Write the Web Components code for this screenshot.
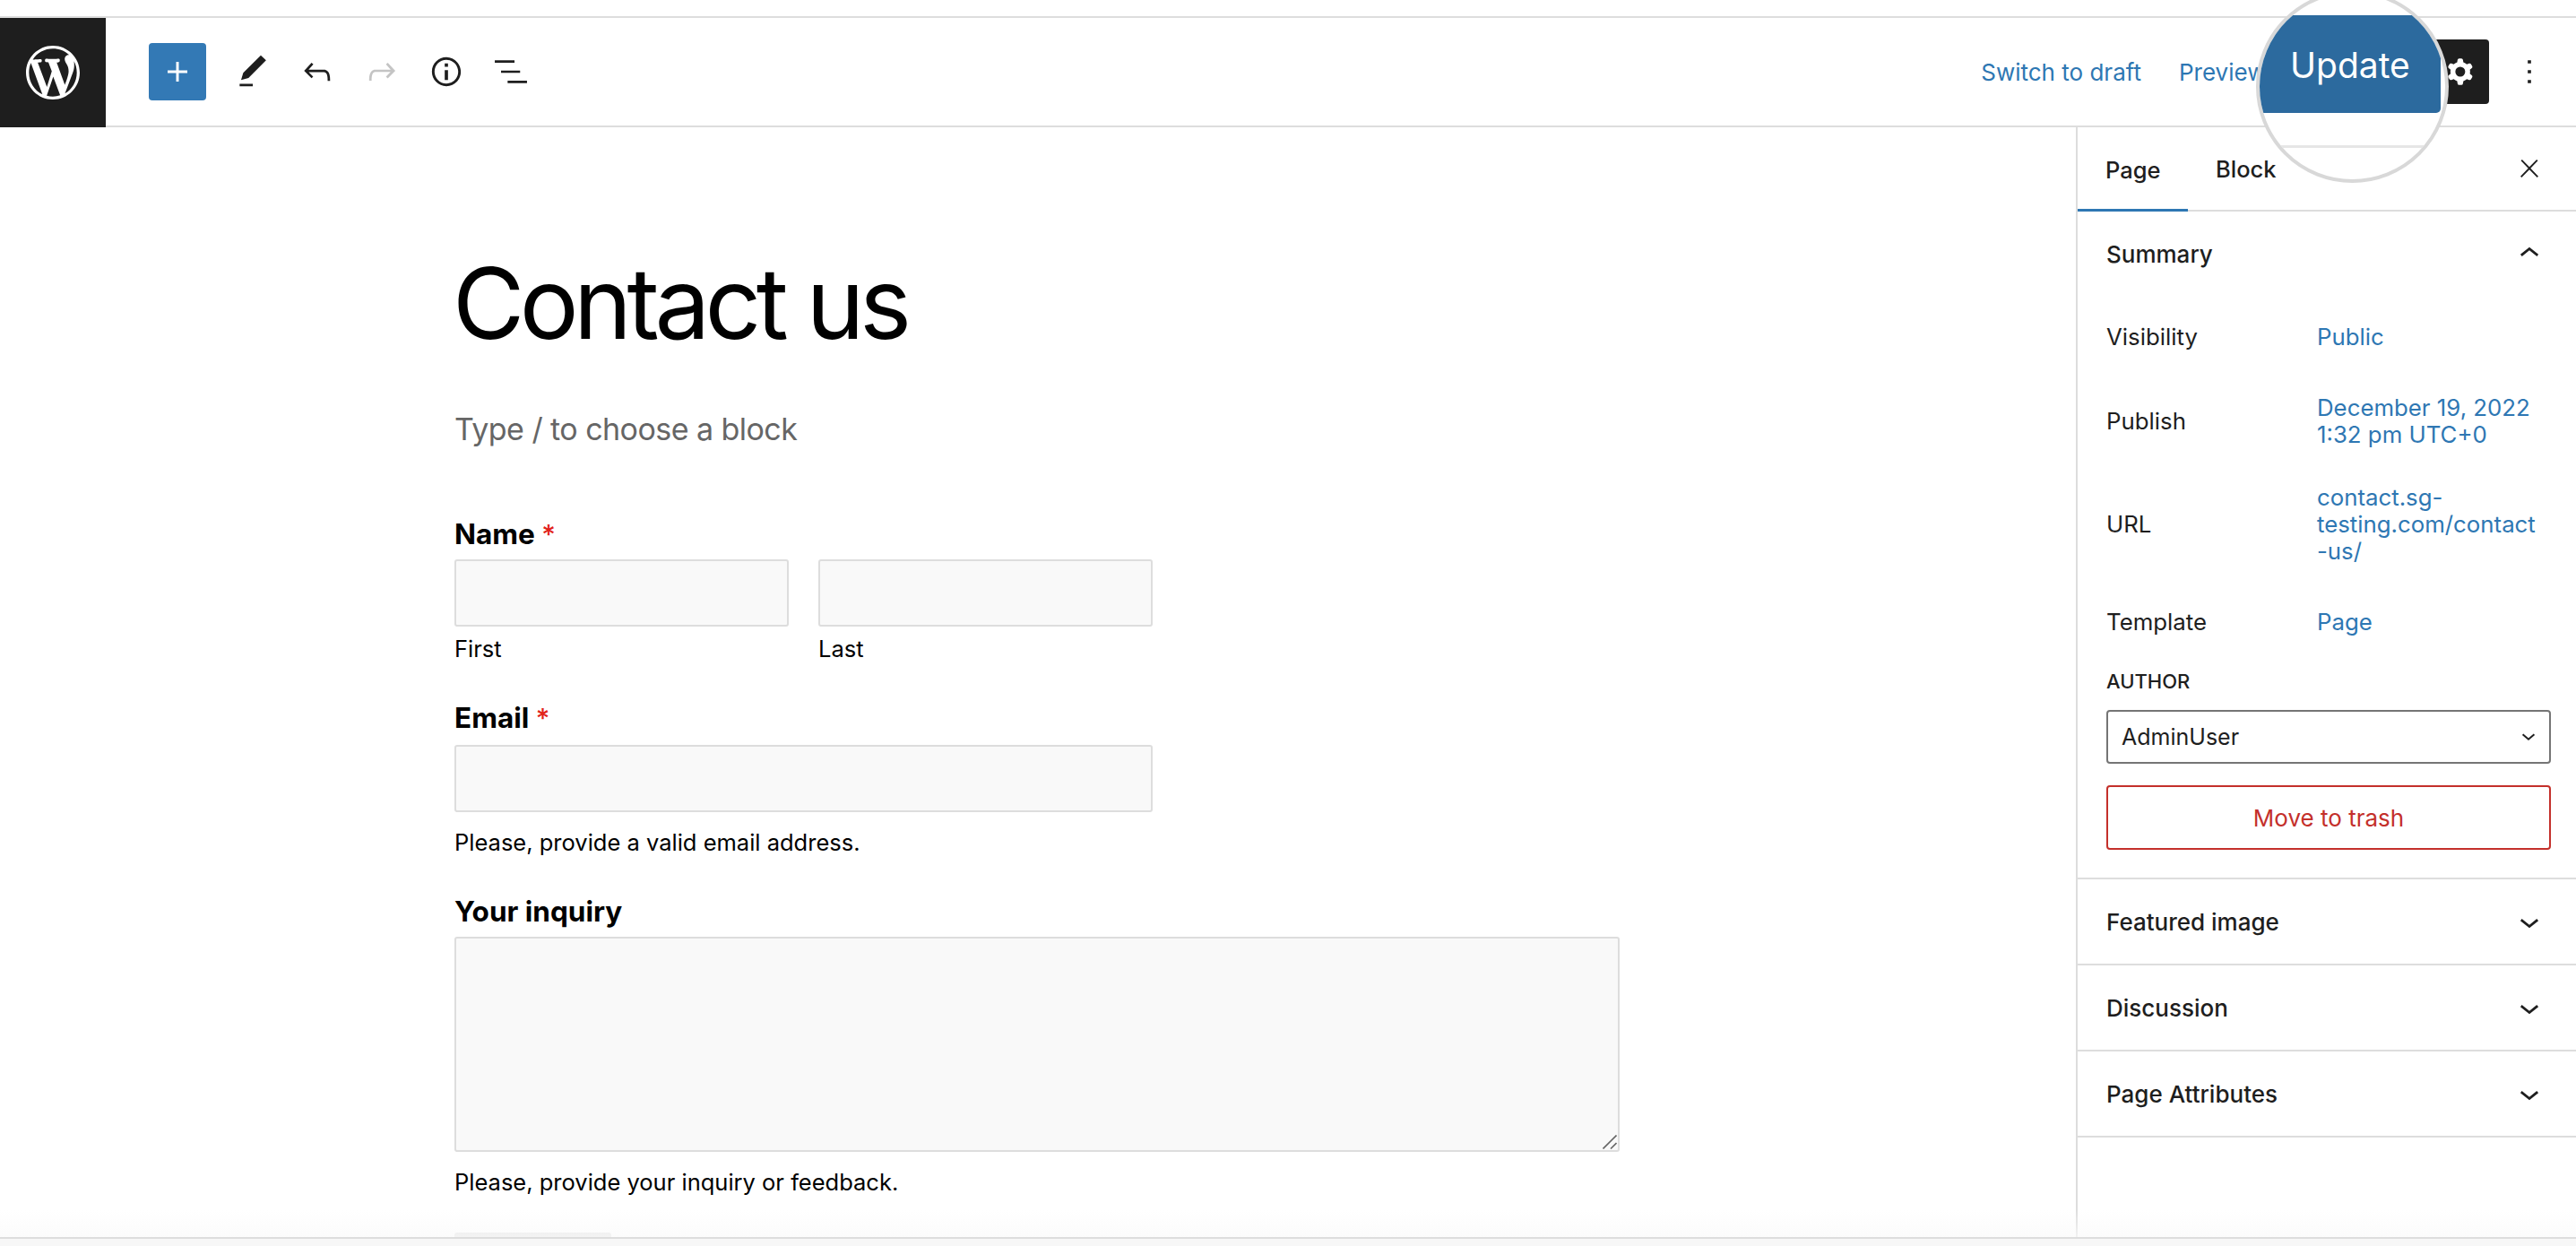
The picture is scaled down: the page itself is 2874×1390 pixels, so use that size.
<!DOCTYPE html>
<html>
<head>
<meta charset="utf-8">
<title>Contact us</title>
<style>
  html, body { margin: 0; padding: 0; background: #fff; }
  body { font-family: Inter, "Liberation Sans", sans-serif; color: #1e1e1e; overflow: hidden; }
</style>
</head>
<body>
<wp-editor>
  <wp-header slot="header"></wp-header>
  <wp-contact-form slot="main"></wp-contact-form>
  <wp-sidebar slot="side"></wp-sidebar>
</wp-editor>

<script>
const ICONS = {
  plus: 'M18 11.2h-5.2V6h-1.6v5.2H6v1.6h5.2V18h1.6v-5.2H18z',
  edit: 'M20.1 5.1L16.9 2 6.2 12.7l-1.3 4.4 4.5-1.3L20.1 5.1zM4 20.8h8v-1.5H4v1.5z',
  undo: 'M18.3 11.7c-.6-.6-1.4-.9-2.3-.9H6.7l2.9-3.3-1.1-1-4.5 5L8.5 16l1-1-2.7-2.7H16c.5 0 .9.2 1.3.5 1 1 1 3.4 1 4.5v.3h1.5v-.2c0-1.5 0-4.3-1.5-5.7z',
  redo: 'M15.6 6.5l-1.1 1 2.9 3.3H8c-.9 0-1.7.3-2.3.9-1.4 1.5-1.4 4.2-1.4 5.6v.2h1.5v-.3c0-1.1 0-3.5 1-4.5.3-.3.7-.5 1.3-.5h9.2L14.5 15l1.1 1.1 4.6-4.6-4.6-5z',
  info: 'M12 3.2c-4.8 0-8.8 3.9-8.8 8.8 0 4.8 3.9 8.8 8.8 8.8 4.8 0 8.8-3.9 8.8-8.8 0-4.8-4-8.8-8.8-8.8zm0 16c-4 0-7.2-3.3-7.2-7.2C4.8 8 8 4.8 12 4.8s7.2 3.3 7.2 7.2c0 4-3.2 7.2-7.2 7.2zM11 17h2v-6h-2v6zm0-8h2V7h-2v2z',
  list: 'M2.2 5.1h12v1.4h-12zM6 11.3h11.6v1.4H6zM10 17.5h11.8v1.4H10z',
  cog: 'M10.289 4.836A1 1 0 0 1 11.275 4h1.306a1 1 0 0 1 .987.836l.244 1.466c.787.26 1.503.679 2.108 1.218l1.393-.522a1 1 0 0 1 1.216.437l.653 1.13a1 1 0 0 1-.23 1.273l-1.148.944a6.025 6.025 0 0 1 0 2.435l1.149.946a1 1 0 0 1 .23 1.272l-.653 1.13a1 1 0 0 1-1.216.437l-1.394-.522c-.605.54-1.32.958-2.108 1.218l-.244 1.466a1 1 0 0 1-.987.836h-1.306a1 1 0 0 1-.986-.836l-.244-1.466a5.995 5.995 0 0 1-2.108-1.218l-1.394.522a1 1 0 0 1-1.217-.436l-.653-1.131a1 1 0 0 1 .23-1.272l1.149-.946a6.026 6.026 0 0 1 0-2.435l-1.148-.944a1 1 0 0 1-.23-1.272l.653-1.131a1 1 0 0 1 1.217-.437l1.393.522a5.994 5.994 0 0 1 2.108-1.218l.244-1.466ZM14.929 12a3 3 0 1 1-6 0 3 3 0 0 1 6 0Z',
  more: 'M13 19h-2v-2h2v2zm0-6h-2v-2h2v2zm0-6h-2V5h2v2z',
  close: 'M13 11.8l6.1-6.3-1-1-6.1 6.2-6.1-6.2-1 1 6.1 6.3-6.5 6.7 1 1 6.5-6.6 6.5 6.6 1-1z',
  up: 'M6.5 12.4L12 8l5.5 4.4-.9 1.2L12 10l-4.5 3.6-1-1.2z',
  down: 'M17.5 11.6L12 16l-5.5-4.4.9-1.2L12 14l4.5-3.6 1 1.2z'
};

class WpIcon extends HTMLElement {
  connectedCallback() {
    const d = ICONS[this.getAttribute('name')];
    this.attachShadow({mode: 'open'}).innerHTML = `
      <style>
        :host { display: inline-flex; width: var(--icon-size, 44px); height: var(--icon-size, 44px); color: inherit; }
        svg { width: 100%; height: 100%; fill: currentColor; display: block; }
      </style>
      <svg viewBox="0 0 24 24"><path fill-rule="evenodd" d="${d}"></path></svg>`;
  }
}
customElements.define('wp-icon', WpIcon);

class WpEditor extends HTMLElement {
  constructor() {
    super();
    this.attachShadow({mode: 'open'}).innerHTML = `
      <style>
        :host { display: flex; flex-direction: column; height: 1390px; width: 2874px; overflow: hidden; position: relative; background: #fff; }
        .top { height: 18px; flex: none; border-bottom: 2px solid #ddd; }
        .body { flex: 1; display: flex; min-height: 0; position: relative; overflow: hidden; }
        .main { flex: 1; min-width: 0; overflow: hidden; }
        .fade { position: absolute; left: 0; right: 0; bottom: 0; height: 30px; background: linear-gradient(rgba(250,250,250,0), rgba(250,250,250,.7)); pointer-events: none; }
        .foot { height: 8px; flex: none; border-top: 2px solid #ddd; background: #f7f7f7; }
      </style>
      <div class="top"></div>
      <slot name="header"></slot>
      <div class="body">
        <div class="main"><slot name="main"></slot></div>
        <slot name="side"></slot>
        <div class="fade"></div>
      </div>
      <div class="foot"></div>`;
  }
}
customElements.define('wp-editor', WpEditor);

class WpHeader extends HTMLElement {
  constructor() {
    super();
    this.attachShadow({mode: 'open'}).innerHTML = `
      <style>
        :host { display: flex; flex: none; height: 120px; align-items: center; border-bottom: 2px solid #ddd; position: relative; z-index: 2; background: #fff; font-size: 26px; }
        .logo { width: 118px; height: 122px; margin-bottom: -2px; background: #1e1e1e; display: flex; align-items: center; justify-content: center; flex: none; }
        .logo svg { width: 72px; height: 72px; fill: #fff; display: block; }
        .add { width: 64px; height: 64px; margin: 0 16px 0 48px; background: #3379b5; color: #fff; border-radius: 4px; display: flex; align-items: center; justify-content: center; }
        .tool { width: 72px; height: 64px; display: flex; align-items: center; justify-content: center; color: #1e1e1e; }
        .tool.off { color: #c4c4c4; }
        .spacer { flex: 1; }
        .link { color: #2e77b3; white-space: nowrap; }
        .preview { width: 282px; margin-left: 42px; }
        .gear { width: 64px; height: 72px; background: #1e1e1e; color: #fff; border-radius: 4px; display: flex; align-items: center; justify-content: center; }
        .more { margin: 0 30px 0 23px; color: #1e1e1e; display: flex; }
        .lens { position: absolute; left: 2517px; top: -31px; width: 215px; height: 215px; box-sizing: border-box; border: 4px solid #d8d8d8; border-radius: 50%; background: #fff; overflow: hidden; }
        .lens .update { position: absolute; left: -40px; top: 24px; width: 242px; height: 109px; background: #2c6a9e; border-radius: 5px; color: #fff; font-size: 39px; line-height: 1; }
        .lens .update span { position: absolute; left: 74px; top: 36px; }
        .lens .rule { position: absolute; left: 0; right: 0; top: 169px; height: 3px; background: #e6e6e6; }
      </style>
      <div class="logo"><svg viewBox="-2 -2 24 24"><path d="M20 10c0-5.51-4.49-10-10-10C4.48 0 0 4.49 0 10c0 5.52 4.48 10 10 10 5.51 0 10-4.48 10-10zM7.78 15.37L4.37 6.22c.55-.02 1.17-.08 1.17-.08.5-.06.44-1.13-.06-1.11 0 0-1.45.11-2.37.11-.18 0-.37 0-.58-.01C4.12 2.69 6.87 1.11 10 1.11c2.33 0 4.45.87 6.05 2.34-.68-.11-1.65.39-1.65 1.58 0 .74.45 1.36.9 2.1.35.61.55 1.36.55 2.46 0 1.49-1.4 5-1.4 5l-3.03-8.37c.54-.02.82-.17.82-.17.5-.05.44-1.25-.06-1.22 0 0-1.44.12-2.38.12-.87 0-2.33-.12-2.33-.12-.5-.03-.56 1.2-.06 1.22l.92.08 1.26 3.41zM17.41 10c.24-.64.74-1.87.43-4.25.7 1.29 1.05 2.71 1.05 4.25 0 3.29-1.73 6.24-4.4 7.78.97-2.59 1.94-5.2 2.92-7.78zM6.1 18.09C3.12 16.65 1.11 13.53 1.11 10c0-1.3.23-2.48.72-3.59C3.25 10.3 4.67 14.2 6.1 18.09zm4.03-6.63l2.58 6.98c-.86.29-1.76.45-2.71.45-.79 0-1.57-.11-2.29-.33.81-2.38 1.62-4.74 2.42-7.1z"></path></svg></div>
      <div class="add"><wp-icon name="plus"></wp-icon></div>
      <div class="tool"><wp-icon name="edit"></wp-icon></div>
      <div class="tool"><wp-icon name="undo"></wp-icon></div>
      <div class="tool off"><wp-icon name="redo"></wp-icon></div>
      <div class="tool"><wp-icon name="info"></wp-icon></div>
      <div class="tool"><wp-icon name="list"></wp-icon></div>
      <div class="spacer"></div>
      <span class="link">Switch to draft</span>
      <span class="link preview">Preview</span>
      <div class="gear"><wp-icon name="cog"></wp-icon></div>
      <div class="more"><wp-icon name="more"></wp-icon></div>
      <div class="lens">
        <div class="update"><span>Update</span></div>
        <div class="rule"></div>
      </div>`;
  }
}
customElements.define('wp-header', WpHeader);

class WpField extends HTMLElement {
  connectedCallback() {
    const label = this.getAttribute('label');
    const req = this.hasAttribute('required') ? ' <i>*</i>' : '';
    this.attachShadow({mode: 'open'}).innerHTML = `
      <style>
        :host { display: block; }
        .label { font-size: 31.5px; line-height: 40px; font-weight: 700; color: #000; height: 40px; margin-bottom: var(--label-gap, 8px); }
        i { color: #e2231a; font-style: normal; font-weight: 500; font-size: 30px; }
        .hint { font-size: 25.5px; line-height: 34px; color: #000; margin-top: 17px; }
        .hint:empty { display: none; }
      </style>
      <div class="label">${label}${req}</div>
      <slot></slot>
      <div class="hint">${this.getAttribute('hint') || ''}</div>`;
  }
}
customElements.define('wp-field', WpField);

class WpInput extends HTMLElement {
  connectedCallback() {
    const area = this.hasAttribute('area');
    this.attachShadow({mode: 'open'}).innerHTML = `
      <style>
        :host { display: block; font-size: 25.5px; color: #000; line-height: 34px; position: relative; }
        input, textarea { display: block; width: 100%; box-sizing: border-box; height: ${area ? 240 : 75}px; background: #f9f9f9; border: 2px solid #ddd; border-radius: 3px; margin: 0; padding: 0; outline: 0; resize: none; }
        .grip { position: absolute; right: 3px; bottom: 3px; width: 16px; height: 16px; }
        .sub { margin-top: 8px; }
        .sub:empty { display: none; }
      </style>
      ${area ? `<textarea></textarea>
      <svg class="grip" viewBox="0 0 16 16" fill="none" stroke="#666" stroke-width="1.6"><path d="M0.5 15.5L15.5 0.5M9 15.5L15.5 9"></path></svg>` : '<input type="text">'}
      <div class="sub">${this.getAttribute('sub') || ''}</div>`;
  }
}
customElements.define('wp-input', WpInput);

class WpContactForm extends HTMLElement {
  constructor() {
    super();
    this.attachShadow({mode: 'open'}).innerHTML = `
      <style>
        :host { display: block; padding: 136px 0 0 507px; width: 1300px; }
        h1 { margin: 0 0 0 -2px; font-size: 110px; line-height: 120px; font-weight: 400; color: #000; letter-spacing: -5.6px; }
        .hintline { font-size: 34px; line-height: 50px; color: #666; margin: 56px 0 0; letter-spacing: -0.55px; }
        .name { margin-top: 72px; }
        .pair { display: flex; gap: 33px; width: 779px; }
        .pair wp-input { flex: 1; }
        .email { margin-top: 40px; width: 779px; --label-gap: 10px; }
        .inquiry { margin-top: 40px; }
        .submit { margin-top: 39px; width: 175px; height: 60px; background: #e4e4e4; border-radius: 3px; }
      </style>
      <h1>Contact us</h1>
      <p class="hintline">Type / to choose a block</p>
      <wp-field class="name" label="Name" required>
        <div class="pair">
          <wp-input sub="First"></wp-input>
          <wp-input sub="Last"></wp-input>
        </div>
      </wp-field>
      <wp-field class="email" label="Email" required hint="Please, provide a valid email address."><wp-input></wp-input></wp-field>
      <wp-field class="inquiry" label="Your inquiry" hint="Please, provide your inquiry or feedback."><wp-input area></wp-input></wp-field>
      <div class="submit"></div>`;
  }
}
customElements.define('wp-contact-form', WpContactForm);

class WpRow extends HTMLElement {
  constructor() {
    super();
    this.attachShadow({mode: 'open'}).innerHTML = `
      <style>
        :host { display: grid; grid-template-columns: 235px 1fr; align-items: center; font-size: 25.8px; line-height: 30px; }
        .v { color: #2e77b3; overflow-wrap: anywhere; }
      </style>
      <div><slot name="k"></slot></div>
      <div class="v"><slot></slot></div>`;
  }
}
customElements.define('wp-row', WpRow);

class WpPanel extends HTMLElement {
  connectedCallback() {
    const open = this.hasAttribute('open');
    this.attachShadow({mode: 'open'}).innerHTML = `
      <style>
        :host { display: block; border-bottom: 2px solid #ddd; }
        .head { height: 94px; box-sizing: border-box; display: flex; align-items: center; justify-content: space-between; padding: 0 30px 0 32px; font-size: 26px; font-weight: 500; color: #1e1e1e; }
        .content { padding: 0 28px 31px 32px; }
        .content:empty { display: none; }
      </style>
      <div class="head"><span>${this.getAttribute('title')}</span><wp-icon name="${open ? 'up' : 'down'}"></wp-icon></div>
      ${open ? '<div class="content"><slot></slot></div>' : ''}`;
  }
}
customElements.define('wp-panel', WpPanel);

class WpSidebar extends HTMLElement {
  constructor() {
    super();
    this.attachShadow({mode: 'open'}).innerHTML = `
      <style>
        :host { display: block; width: 558px; flex: none; box-sizing: border-box; border-left: 2px solid #ddd; background: #fff; font-size: 26px; color: #1e1e1e; }
        .tabs { height: 92px; display: flex; align-items: center; border-bottom: 2px solid #ddd; position: relative; font-weight: 500; font-size: 25.5px; }
        .tab { height: 92px; display: flex; align-items: center; padding: 0 31px; }
        .tab.on { box-shadow: inset 0 -3px 0 #2e77b3; margin-bottom: -2px; height: 94px; width: 123px; box-sizing: border-box; }
        .close { margin: 0 36px 0 auto; display: flex; --icon-size: 32px; }
        wp-row.r1 { margin-top: 31px; }
        wp-row.r2 { margin-top: 49px; }
        wp-row.r3 { margin-top: 40px; }
        wp-row.r4 { margin-top: 49px; }
        .author { font-size: 22px; line-height: 26px; font-weight: 500; margin-top: 38px; }
        .select { margin-top: 19px; height: 60px; box-sizing: border-box; border: 2px solid #757575; border-radius: 4px; display: flex; align-items: center; justify-content: space-between; padding: 0 12px 0 15px; font-size: 25px; }
        .select svg { width: 22px; height: 22px; fill: none; stroke: #1e1e1e; stroke-width: 2.2; }
        .trash { margin-top: 24px; height: 72px; box-sizing: border-box; border: 2px solid #c4302b; border-radius: 4px; color: #c4302b; display: flex; align-items: center; justify-content: center; }
      </style>
      <div class="tabs">
        <div class="tab on">Page</div>
        <div class="tab">Block</div>
        <div class="close"><wp-icon name="close"></wp-icon></div>
      </div>
      <wp-panel title="Summary" open>
        <wp-row class="r1"><span slot="k">Visibility</span>Public</wp-row>
        <wp-row class="r2"><span slot="k">Publish</span>December 19, 2022<br>1:32 pm UTC+0</wp-row>
        <wp-row class="r3"><span slot="k">URL</span>contact.sg-<br>testing.com/contact<br>-us/</wp-row>
        <wp-row class="r4"><span slot="k">Template</span>Page</wp-row>
        <div class="author">AUTHOR</div>
        <div class="select"><span>AdminUser</span><svg viewBox="0 0 24 24"><path d="M5 9l7 6 7-6"></path></svg></div>
        <div class="trash">Move to trash</div>
      </wp-panel>
      <wp-panel title="Featured image"></wp-panel>
      <wp-panel title="Discussion"></wp-panel>
      <wp-panel title="Page Attributes"></wp-panel>`;
  }
}
customElements.define('wp-sidebar', WpSidebar);
</script>
</body>
</html>
